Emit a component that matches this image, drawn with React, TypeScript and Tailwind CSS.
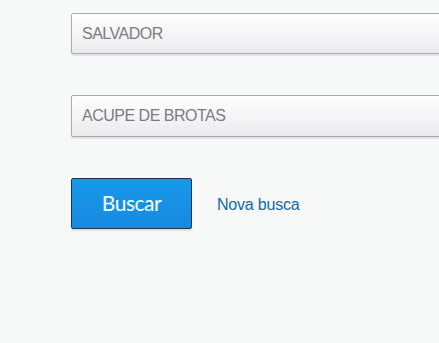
export default function App() {
  return (
    <div className="w-[439px] h-[343px] overflow-hidden bg-[#f7f9f9] pl-[71px] pt-[13px]" style={{ fontFamily: '"Liberation Sans", Arial, sans-serif' }}>
      <div className="flex flex-col gap-[41px] w-[420px]">
        <div className="h-[41px] w-[420px] shrink-0 rounded-[2px] border border-[#a9a9b1] bg-gradient-to-b from-white to-[#ebebee] shadow-[0_2px_1px_rgba(0,0,0,0.08)] flex items-center pl-[10px] text-[16px] tracking-[-0.5px] text-[#7b7b82]">
          SALVADOR
        </div>
        <div className="h-[42px] w-[420px] shrink-0 rounded-[2px] border border-[#a9a9b1] bg-gradient-to-b from-white to-[#ebebee] shadow-[0_2px_1px_rgba(0,0,0,0.08)] flex items-center pl-[10px] text-[16px] tracking-[-0.5px] text-[#7b7b82]">
          ACUPE DE BROTAS
        </div>
        <div className="flex items-center">
          <button className="h-[51px] w-[121px] rounded-[2px] border border-[#1b3550] bg-gradient-to-b from-[#1898ea] to-[#168ae0] shadow-[0_2px_1px_rgba(0,0,0,0.1)] text-white text-[21px] tracking-[-0.5px] flex items-center justify-center pb-[2px]" style={{ fontFamily: 'Lato, sans-serif' }}>
            Buscar
          </button>
          <span className="ml-[25px] mt-[3px] text-[16px] tracking-[-0.2px] text-[#1068ae]">Nova busca</span>
        </div>
      </div>
    </div>
  );
}
